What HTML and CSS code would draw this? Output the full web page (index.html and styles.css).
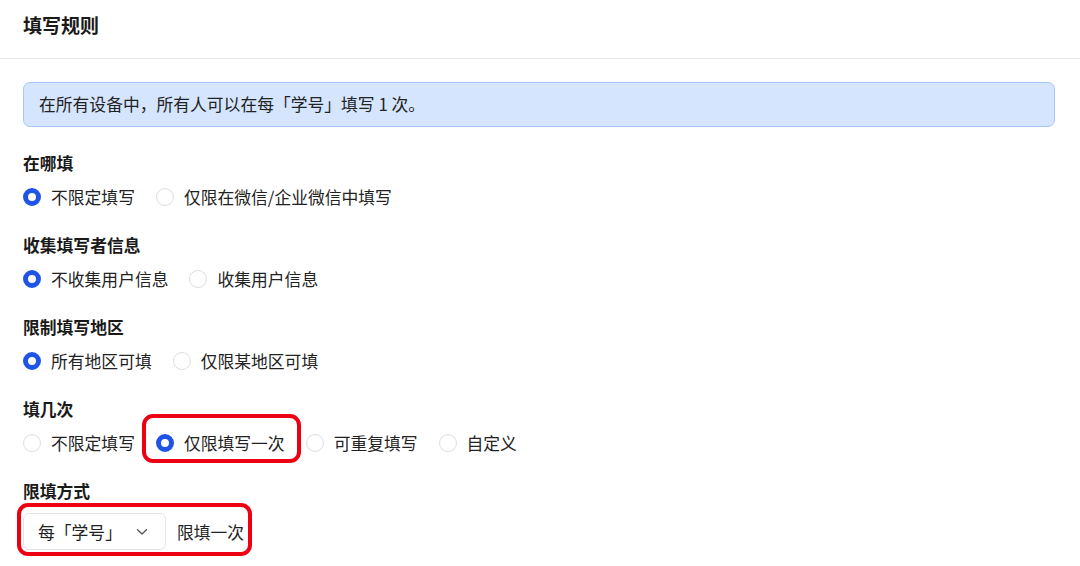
FILE: index.html
```html
<!DOCTYPE html>
<html lang="zh">
<head>
<meta charset="utf-8">
<link rel="stylesheet" href="styles.css">
</head>
<body>
<div class="header"><h1 class="title">填写规则</h1></div>
<div class="content">
  <div class="alert">在所有设备中，所有人可以在每「学号」填写 1 次。</div>

  <div class="section">
    <div class="label">在哪填</div>
    <div class="options">
      <label class="opt"><span class="radio on"></span><span>不限定填写</span></label>
      <label class="opt"><span class="radio"></span><span>仅限在微信/企业微信中填写</span></label>
    </div>
  </div>

  <div class="section">
    <div class="label">收集填写者信息</div>
    <div class="options">
      <label class="opt"><span class="radio on"></span><span>不收集用户信息</span></label>
      <label class="opt"><span class="radio"></span><span>收集用户信息</span></label>
    </div>
  </div>

  <div class="section">
    <div class="label">限制填写地区</div>
    <div class="options">
      <label class="opt"><span class="radio on"></span><span>所有地区可填</span></label>
      <label class="opt"><span class="radio"></span><span>仅限某地区可填</span></label>
    </div>
  </div>

  <div class="section">
    <div class="label">填几次</div>
    <div class="options">
      <label class="opt"><span class="radio"></span><span>不限定填写</span></label>
      <label class="opt marked"><span class="radio on"></span><span>仅限填写一次</span></label>
      <label class="opt"><span class="radio"></span><span>可重复填写</span></label>
      <label class="opt"><span class="radio"></span><span>自定义</span></label>
    </div>
  </div>

  <div class="section">
    <div class="label">限填方式</div>
    <div class="limit marked2">
      <div class="select"><span>每「学号」</span>
        <svg class="chev" width="12" height="8" viewBox="0 0 12 8"><path d="M1.5 1.8 L6 6 L10.5 1.8" fill="none" stroke="#555" stroke-width="1.3" stroke-linecap="round" stroke-linejoin="round"/></svg>
      </div>
      <span class="limit-text">限填一次</span>
    </div>
  </div>
</div>
</body>
</html>
```

FILE: styles.css
```css
* { box-sizing: border-box; }
body {
  margin: 0;
  background: #fff;
  font-family: "Noto Sans CJK SC", "Noto Sans", sans-serif;
  color: #222;
  font-size: 16.8px;
}
.header {
  height: 59px;
  border-bottom: 1px solid #e6e6e6;
  padding: 12px 23px 0;
}
.title {
  margin: 0;
  font-size: 19px;
  line-height: 26px;
  font-weight: 700;
  color: #1a1a1a;
}
.content {
  padding: 23px 25px 0 23px;
}
.alert {
  height: 45px;
  line-height: 43px;
  padding: 0 15px;
  background: #d4e5fd;
  border: 1px solid #a6c7f7;
  border-radius: 7px;
  color: #222;
  margin-bottom: 24px;
}
.section { margin-bottom: 18px; }
.label {
  font-weight: 700;
  line-height: 24px;
  color: #1a1a1a;
}
.options {
  display: flex;
  align-items: center;
  height: 36px;
  margin-top: 4px;
  gap: 21px;
}
.opt {
  display: flex;
  align-items: center;
  gap: 10px;
  line-height: 24px;
  position: relative;
}
.radio {
  width: 18px;
  height: 18px;
  border-radius: 50%;
  border: 1px solid #dcdee3;
  background: #fff;
  flex: none;
}
.radio.on {
  border: 5.5px solid #1f55e6;
  background: #fff;
}
.marked::after {
  content: "";
  position: absolute;
  left: -14px;
  right: -16px;
  top: -17px;
  bottom: -8px;
  border: 4px solid #ec0012;
  border-radius: 11px;
}
.limit {
  display: flex;
  align-items: center;
  gap: 11px;
  margin-top: 10px;
  position: relative;
  width: max-content;
}
.marked2::after {
  content: "";
  position: absolute;
  left: -6px;
  right: -8px;
  top: -10px;
  bottom: -6px;
  border: 4px solid #ec0012;
  border-radius: 11px;
}
.select {
  width: 143px;
  height: 37px;
  border: 1px solid #e2e4e8;
  border-radius: 6px;
  padding: 0 17px 0 14px;
  display: flex;
  align-items: center;
  justify-content: space-between;
}
.chev { display: block; }
.limit-text { line-height: 24px; }
```
